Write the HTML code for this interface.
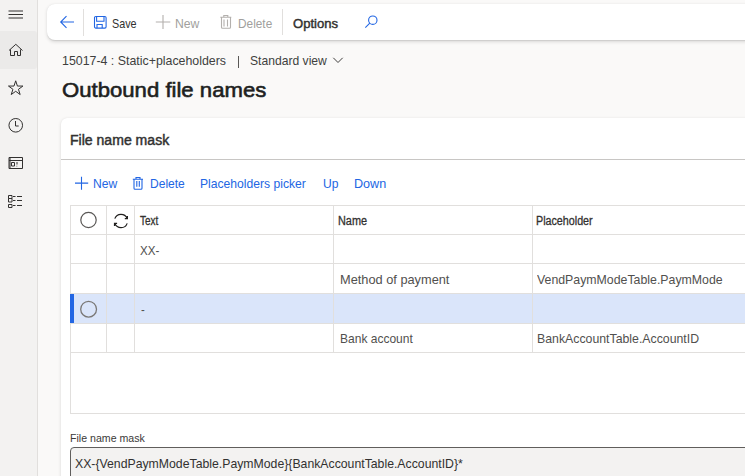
<!DOCTYPE html><html><head><meta charset="utf-8"><style>
*{margin:0;padding:0;box-sizing:border-box}
html,body{width:745px;height:476px;overflow:hidden;background:#faf9f8;font-family:"Liberation Sans",sans-serif}
.t{position:absolute;white-space:nowrap;transform-origin:0 0}
.a{position:absolute}
</style></head><body>

<div class="a" style="left:0;top:0;width:38px;height:476px;background:#f3f2f1;border-right:1px solid #e1dfdd"></div>
<div class="a" style="left:0;top:31px;width:36.5px;height:37.5px;background:#ebeae9;border-radius:0 3px 3px 0"></div>
<svg class="a" style="left:0;top:0" width="38" height="476" viewBox="0 0 38 476" fill="none" stroke="#323130" stroke-width="1" stroke-linejoin="miter">
  <path d="M8.5 11h14.5M8.5 14.5h14.5M8.5 18h14.5"/>
  <path d="M9 50.5L15.8 44.3L22.5 50.5M10.5 49.5V55.5H14.5V51.5H17.5V55.5H20.5V49.5"/>
  <path d="M15.70 80.80 L17.41 86.05 L22.93 86.05 L18.46 89.30 L20.17 94.55 L15.70 91.30 L11.23 94.55 L12.94 89.30 L8.47 86.05 L13.99 86.05Z"/>
  <circle cx="15.75" cy="125.3" r="6.8"/><path d="M15.5 121v5h3.2"/>
  <path d="M9 157.5h13.5v11H9zM9 160.5h13.5M10 158v10M11.5 162.5h3v3.5h-3zM17 162v2.5M16.8 165.8v.6"/>
  <path d="M8.5 195.5h3.5v3h-3.5zM8.5 198.5h3.5v3.5h-3.5zM8.5 204.5h3.5v3h-3.5zM13 196.5h2.5M17 196.5h5M13 200.5h2.5M17 200.5h5M13 205.5h2.5M17 205.5h5"/>
</svg>

<div class="a" style="left:47px;top:4px;width:760px;height:36px;background:#fff;border-radius:8px;box-shadow:0 1.6px 3.6px rgba(0,0,0,.13),0 .3px .9px rgba(0,0,0,.08)"></div>
<div class="a" style="left:83px;top:9px;width:1px;height:27px;background:#e1dfdd"></div>
<div class="a" style="left:282px;top:9px;width:1px;height:26px;background:#e1dfdd"></div>
<svg class="a" style="left:0;top:0" width="400" height="45" viewBox="0 0 400 45" fill="none" stroke-width="1.1">
  <path d="M74 22H60.8M66.5 16.2L60.7 22L66.5 27.8" stroke="#2266e3"/>
  <path d="M95.8 16.5h9a1.3 1.3 0 0 1 1.3 1.3v9a1.3 1.3 0 0 1-1.3 1.3h-9a1.3 1.3 0 0 1-1.3-1.3v-9a1.3 1.3 0 0 1 1.3-1.3z M96.6 16.5v4.8h7.4v-4.8 M97 28.1v-3.6h5.2v3.6" stroke="#2266e3"/>
  <path d="M155.8 22h14.5M163 15v14" stroke="#b3b0ad"/>
  <path d="M220.3 17.3h11M223.8 17.3v-1.8h4v1.8M221.5 17.3v10a1 1 0 0 0 1 1h7a1 1 0 0 0 1-1v-10M224 19.5v7M227.5 19.5v7" stroke="#b3b0ad"/>
  <circle cx="372.8" cy="20.2" r="4.2" stroke="#2266e3"/><path d="M369.8 23.2l-4.5 4.5" stroke="#2266e3"/>
</svg>
<svg class="a" style="left:330px;top:54px" width="16" height="12" viewBox="0 0 16 12" fill="none" stroke="#403f3e" stroke-width="1"><path d="M3.3 3.8l4.7 4.7 4.7-4.7"/></svg>
<div class="a" style="left:238px;top:55.5px;width:1.1px;height:12px;background:#5a5856"></div>

<div class="a" style="left:61px;top:118px;width:760px;height:400px;background:#fff;border-radius:6px;box-shadow:0 1.6px 3.6px rgba(0,0,0,.13),0 .3px .9px rgba(0,0,0,.08)"></div>
<div class="a" style="left:61px;top:159px;width:700px;height:1px;background:#c8c6c4"></div>
<svg class="a" style="left:0;top:0" width="400" height="200" viewBox="0 0 400 200" fill="none" stroke-width="1.1">
  <path d="M75 183.1h13.2M81.5 176.8v13" stroke="#2266e3"/>
  <path d="M132.8 179.3h10.2M136 179.3v-1.8h4v1.8M134 179.3v9a1 1 0 0 0 1 1h6a1 1 0 0 0 1-1v-9M136.8 181v5.8M139.3 181v5.8" stroke="#2266e3"/>
</svg>

<!-- grid -->
<div class="a" style="left:70px;top:205px;width:700px;height:209px;border:1px solid #e1dfdd"></div>
<div class="a" style="left:71px;top:293px;width:700px;height:31px;background:#dae5fa"></div>
<div class="a" style="left:70px;top:293px;width:4px;height:31px;background:#2266e3"></div>
<div class="a" style="left:70px;top:234px;width:700px;height:1px;background:#e1dfdd"></div>
<div class="a" style="left:70px;top:263px;width:700px;height:1px;background:#e1dfdd"></div>
<div class="a" style="left:70px;top:293px;width:700px;height:1px;background:#e1dfdd"></div>
<div class="a" style="left:70px;top:323px;width:700px;height:1px;background:#e1dfdd"></div>
<div class="a" style="left:70px;top:352px;width:700px;height:1px;background:#e1dfdd"></div>
<div class="a" style="left:106px;top:205px;width:1px;height:148px;background:#e1dfdd"></div>
<div class="a" style="left:134px;top:205px;width:1px;height:148px;background:#e1dfdd"></div>
<div class="a" style="left:333px;top:205px;width:1px;height:148px;background:#e1dfdd"></div>
<div class="a" style="left:532px;top:205px;width:1px;height:148px;background:#e1dfdd"></div>
<svg class="a" style="left:0;top:200px" width="200" height="130" viewBox="0 200 200 130" fill="none" stroke-width="1.1">
  <circle cx="88.5" cy="220" r="7.7" stroke="#5a5856" stroke-width="1.2"/>
  <path d="M114.8 218.6A6.6 6.6 0 0 1 127.1 218.4M124.8 218.6H127.4V216.1" stroke="#201f1e" stroke-width="1.2"/>
  <path d="M127.2 223.4A6.6 6.6 0 0 1 114.9 223.6M117.1 223.4H114.5V226" stroke="#201f1e" stroke-width="1.2"/>
  <circle cx="88.6" cy="309.2" r="7.9" stroke="#7a7876" stroke-width="1.3"/>
</svg>

<div class="a" style="left:70px;top:447px;width:700px;height:40px;background:#f3f2f1;border:1px solid #605e5c;border-radius:4px 0 0 0"></div>

<div class="t" style="left:111.60px;top:17.05px;font-size:13px;line-height:13px;font-weight:400;color:#323130;transform:scaleX(0.8300)">Save</div>
<div class="t" style="left:175.00px;top:17.05px;font-size:13px;line-height:13px;font-weight:400;color:#a19f9d;transform:scaleX(0.9385)">New</div>
<div class="t" style="left:238.30px;top:17.05px;font-size:13px;line-height:13px;font-weight:400;color:#a19f9d;transform:scaleX(0.9105)">Delete</div>
<div class="t" style="left:293.20px;top:17.05px;font-size:13px;line-height:13px;font-weight:400;color:#323130;transform:scaleX(1.0067);-webkit-text-stroke:0.45px #323130">Options</div>
<div class="t" style="left:61.70px;top:53.95px;font-size:13px;line-height:13px;font-weight:400;color:#403f3e;transform:scaleX(0.9518)">15017-4 : Static+placeholders</div>
<div class="t" style="left:250.00px;top:53.95px;font-size:13px;line-height:13px;font-weight:400;color:#403f3e;transform:scaleX(0.9325)">Standard view</div>
<div class="t" style="left:62.00px;top:79.35px;font-size:21px;line-height:21px;font-weight:400;color:#201f1e;transform:scaleX(1.0541);-webkit-text-stroke:0.6px #201f1e">Outbound file names</div>
<div class="t" style="left:69.60px;top:132.70px;font-size:14px;line-height:14px;font-weight:400;color:#323130;transform:scaleX(1.0040);-webkit-text-stroke:0.45px #323130">File name mask</div>
<div class="t" style="left:92.80px;top:176.95px;font-size:13px;line-height:13px;font-weight:400;color:#2266e3;transform:scaleX(0.9308)">New</div>
<div class="t" style="left:149.50px;top:176.95px;font-size:13px;line-height:13px;font-weight:400;color:#2266e3;transform:scaleX(0.9263)">Delete</div>
<div class="t" style="left:200.40px;top:176.95px;font-size:13px;line-height:13px;font-weight:400;color:#2266e3;transform:scaleX(0.9333)">Placeholders picker</div>
<div class="t" style="left:322.50px;top:176.95px;font-size:13px;line-height:13px;font-weight:400;color:#2266e3;transform:scaleX(0.9294)">Up</div>
<div class="t" style="left:354.00px;top:176.95px;font-size:13px;line-height:13px;font-weight:400;color:#2266e3;transform:scaleX(0.9697)">Down</div>
<div class="t" style="left:139.80px;top:214.70px;font-size:12px;line-height:12px;font-weight:400;color:#323130;transform:scaleX(0.8261);-webkit-text-stroke:0.3px #323130">Text</div>
<div class="t" style="left:337.70px;top:214.70px;font-size:12px;line-height:12px;font-weight:400;color:#323130;transform:scaleX(0.9062);-webkit-text-stroke:0.3px #323130">Name</div>
<div class="t" style="left:536.30px;top:214.70px;font-size:12px;line-height:12px;font-weight:400;color:#323130;transform:scaleX(0.8938);-webkit-text-stroke:0.3px #323130">Placeholder</div>
<div class="t" style="left:140.30px;top:243.65px;font-size:13px;line-height:13px;font-weight:400;color:#51504e;transform:scaleX(0.8905)">XX-</div>
<div class="t" style="left:339.50px;top:272.95px;font-size:13px;line-height:13px;font-weight:400;color:#51504e;transform:scaleX(0.9830)">Method of payment</div>
<div class="t" style="left:537.00px;top:272.95px;font-size:13px;line-height:13px;font-weight:400;color:#51504e;transform:scaleX(0.9480)">VendPaymModeTable.PaymMode</div>
<div class="t" style="left:140.50px;top:302.95px;font-size:13px;line-height:13px;font-weight:400;color:#51504e;transform:scaleX(0.8750)">-</div>
<div class="t" style="left:339.50px;top:332.05px;font-size:13px;line-height:13px;font-weight:400;color:#51504e;transform:scaleX(0.9241)">Bank account</div>
<div class="t" style="left:537.00px;top:332.05px;font-size:13px;line-height:13px;font-weight:400;color:#51504e;transform:scaleX(0.9462)">BankAccountTable.AccountID</div>
<div class="t" style="left:69.80px;top:432.75px;font-size:11px;line-height:11px;font-weight:400;color:#3b3a39;transform:scaleX(0.9641)">File name mask</div>
<div class="t" style="left:75.40px;top:456.65px;font-size:13px;line-height:13px;font-weight:400;color:#323130;transform:scaleX(0.9431)">XX-{VendPaymModeTable.PaymMode}{BankAccountTable.AccountID}*</div>
</body></html>
